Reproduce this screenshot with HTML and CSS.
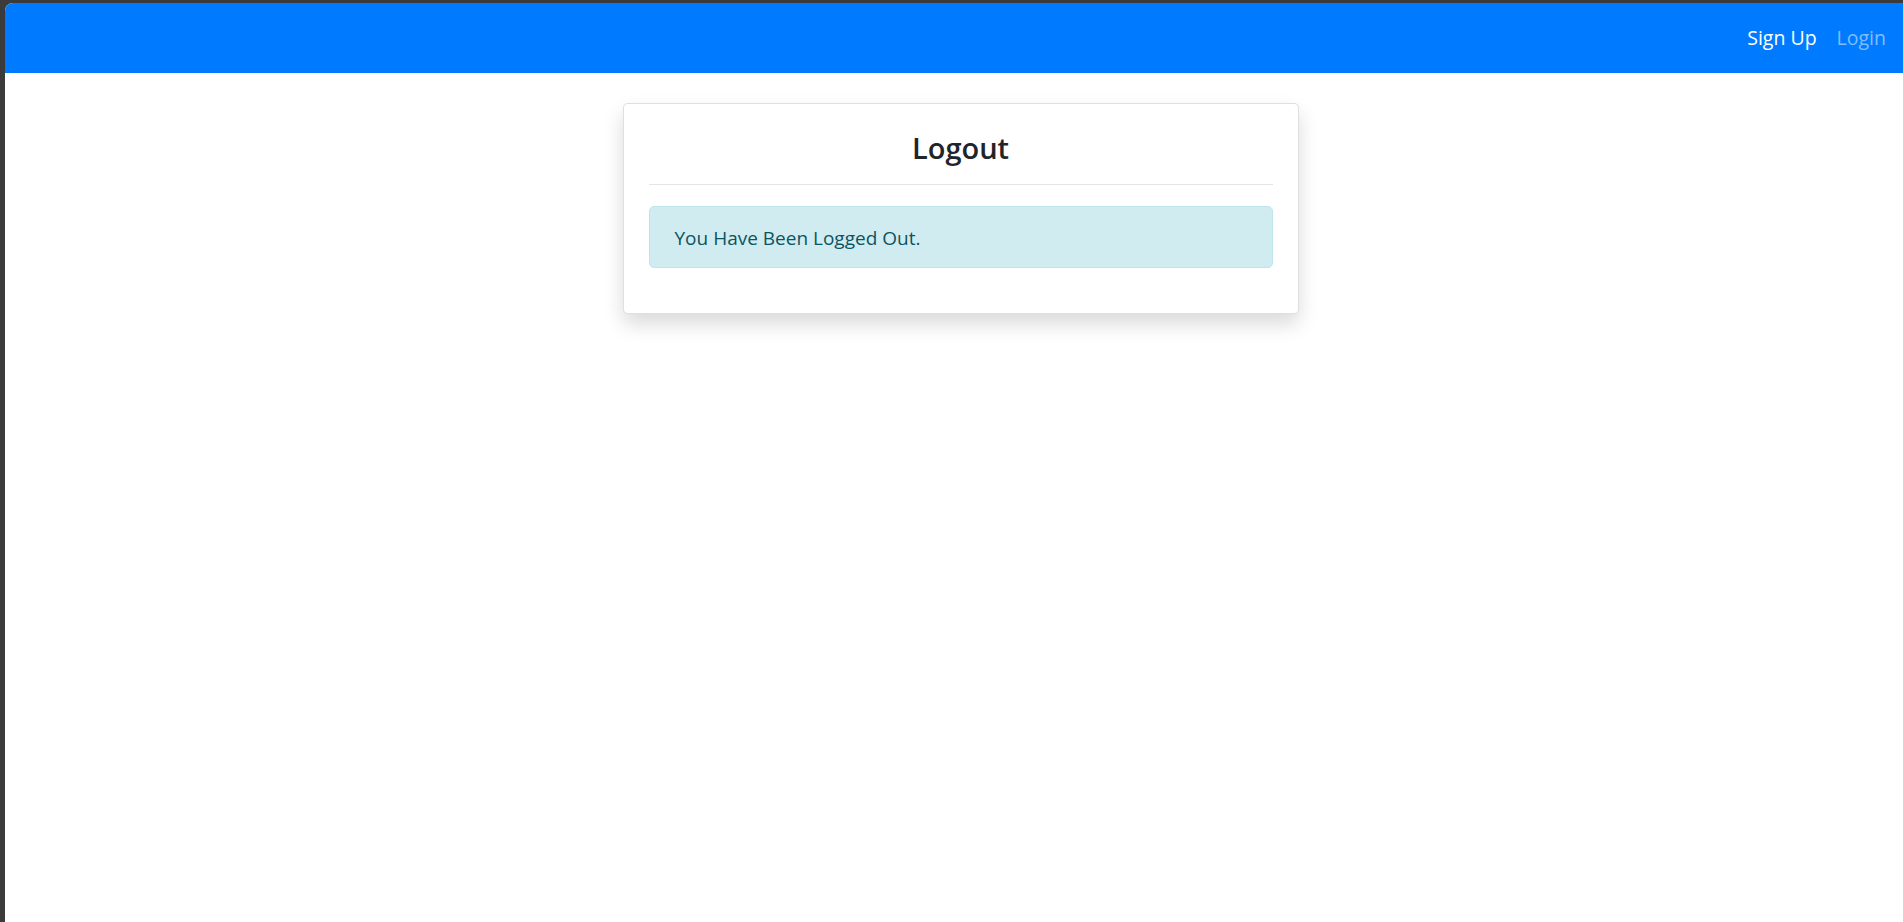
FILE: index.html
```html
<!DOCTYPE html>
<html lang="en">
<head>
<meta charset="utf-8">
<title>Logout</title>
<link rel="stylesheet" href="styles.css">
</head>
<body>
<div class="page">
  <nav class="navbar">
    <ul class="nav">
      <li><a class="nav-link active" href="#">Sign Up</a></li>
      <li><a class="nav-link" href="#">Login</a></li>
    </ul>
  </nav>
  <main class="container">
    <div class="card">
      <h3 class="card-title">Logout</h3>
      <hr class="divider">
      <div class="alert alert-info">You Have Been Logged Out.</div>
    </div>
  </main>
</div>
</body>
</html>
```
FILE: styles.css
```css
html, body {
  margin: 0;
  height: 100%;
}
body {
  background: #3b3b3b;
  padding: 3px 0 0 5px;
  box-sizing: border-box;
  overflow: hidden;
  font-family: "Open Sans", "Noto Sans", sans-serif;
  font-size: 19px;
  line-height: 1.5;
  color: #212529;
}
.page {
  width: 1911px;
  height: 919px;
  background: #fff;
  border-top-left-radius: 8px;
  overflow: hidden;
}
.navbar {
  background: #007bff;
  height: 70px;
  padding: 0 20px;
  display: flex;
  align-items: center;
  justify-content: flex-end;
}
.nav {
  list-style: none;
  margin: 0;
  padding: 0;
  display: flex;
}
.nav-link {
  display: block;
  padding: 10px 10px;
  font-size: 19.5px;
  line-height: 30px;
  color: rgba(255, 255, 255, 0.5);
  text-decoration: none;
}
.nav-link.active {
  color: #fff;
}
.container {
  display: flex;
  justify-content: center;
  padding-top: 30px;
}
.card {
  width: 676px;
  box-sizing: border-box;
  background: #fff;
  border: 1px solid rgba(0, 0, 0, 0.125);
  border-radius: 5px;
  padding: 25px;
  box-shadow: 0 10px 20px rgba(0, 0, 0, 0.15);
}
.card-title {
  margin: 1px 0 0;
  text-align: center;
  font-size: 29px;
  font-weight: 600;
  line-height: 36px;
}
.divider {
  margin: 18px 0 21px;
  border: 0;
  border-top: 1px solid rgba(0, 0, 0, 0.1);
}
.alert {
  padding: 16px 25px 14px;
  margin-bottom: 20px;
  border: 1px solid transparent;
  border-radius: 5px;
  line-height: 30px;
}
.alert-info {
  background: #d1ecf1;
  border-color: #bee5eb;
  color: #0c5460;
}
```
